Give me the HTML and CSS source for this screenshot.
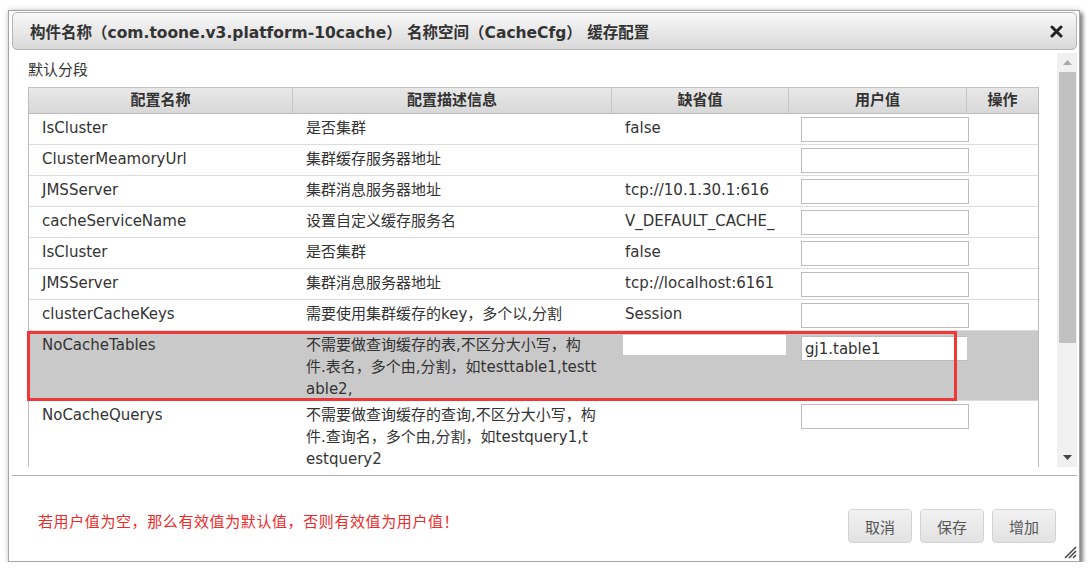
FILE: index.html
```html
<!DOCTYPE html>
<html lang="zh-CN">
<head>
    <meta charset="UTF-8">
    <meta name="viewport" content="width=device-width, initial-scale=1.0">
    <title>缓存配置</title>
    <link rel="stylesheet" href="styles.css">
</head>
<body>
    <!-- Cache config dialog -->
    <div class="dialog">
        <div class="titlebar">
            <span class="title">构件名称（com.toone.v3.platform-10cache） 名称空间（CacheCfg） 缓存配置</span>
            <span class="close">
                <svg width="13" height="13" viewBox="0 0 13 13">
                    <path d="M2 2 L11 11 M11 2 L2 11" stroke="#222" stroke-width="3" stroke-linecap="round"/>
                </svg>
            </span>
        </div>

        <div class="dialog-body">
            <div class="content">
                <div class="group-label">默认分段</div>
                <table class="cfg-table">
                    <colgroup>
                        <col style="width:264px">
                        <col style="width:319px">
                        <col style="width:177px">
                        <col style="width:178px">
                        <col style="width:71px">
                    </colgroup>
                    <thead>
                        <tr>
                            <th>配置名称</th>
                            <th>配置描述信息</th>
                            <th>缺省值</th>
                            <th>用户值</th>
                            <th class="last">操作</th>
                        </tr>
                    </thead>
                    <tbody>
                        <tr>
                            <td>IsCluster</td>
                            <td>是否集群</td>
                            <td class="val"><div class="clip">false</div></td>
                            <td class="user"><input type="text"></td>
                            <td></td>
                        </tr>
                        <tr>
                            <td>ClusterMeamoryUrl</td>
                            <td>集群缓存服务器地址</td>
                            <td class="val"><div class="clip"></div></td>
                            <td class="user"><input type="text"></td>
                            <td></td>
                        </tr>
                        <tr>
                            <td>JMSServer</td>
                            <td>集群消息服务器地址</td>
                            <td class="val"><div class="clip">tcp://10.1.30.1:616</div></td>
                            <td class="user"><input type="text"></td>
                            <td></td>
                        </tr>
                        <tr>
                            <td>cacheServiceName</td>
                            <td>设置自定义缓存服务名</td>
                            <td class="val"><div class="clip">V_DEFAULT_CACHE_</div></td>
                            <td class="user"><input type="text"></td>
                            <td></td>
                        </tr>
                        <tr>
                            <td>IsCluster</td>
                            <td>是否集群</td>
                            <td class="val"><div class="clip">false</div></td>
                            <td class="user"><input type="text"></td>
                            <td></td>
                        </tr>
                        <tr>
                            <td>JMSServer</td>
                            <td>集群消息服务器地址</td>
                            <td class="val"><div class="clip">tcp://localhost:6161</div></td>
                            <td class="user"><input type="text"></td>
                            <td></td>
                        </tr>
                        <tr>
                            <td>clusterCacheKeys</td>
                            <td>需要使用集群缓存的key，多个以,分割</td>
                            <td class="val"><div class="clip">Session</div></td>
                            <td class="user"><input type="text"></td>
                            <td></td>
                        </tr>
                        <tr class="picked">
                            <td>NoCacheTables</td>
                            <td>不需要做查询缓存的表,不区分大小写，构<br>件.表名，多个由,分割，如testtable1,testt<br>able2,</td>
                            <td class="val"><div class="empty-box"></div></td>
                            <td class="user"><input type="text" value="gj1.table1"></td>
                            <td></td>
                        </tr>
                        <tr>
                            <td>NoCacheQuerys</td>
                            <td>不需要做查询缓存的查询,不区分大小写，构<br>件.查询名，多个由,分割，如testquery1,t<br>estquery2</td>
                            <td class="val"><div class="clip"></div></td>
                            <td class="user"><input type="text"></td>
                            <td></td>
                        </tr>
                    </tbody>
                </table>
                <!-- red annotation box -->
                <div class="mark"></div>
            </div>

            <div class="scrollbar">
                <div class="sb-arrow">
                    <svg width="9" height="5" viewBox="0 0 9 5"><path d="M0 5 L4.5 0 L9 5 Z" fill="#a8a8a8"/></svg>
                </div>
                <div class="sb-thumb"></div>
                <div class="sb-gap"></div>
                <div class="sb-arrow">
                    <svg width="9" height="5" viewBox="0 0 9 5"><path d="M0 0 L9 0 L4.5 5 Z" fill="#444"/></svg>
                </div>
            </div>
        </div>

        <div class="footer">
            <div class="note">若用户值为空，那么有效值为默认值，否则有效值为用户值！</div>
            <div class="btn-group">
                <button class="btn">取消</button>
                <button class="btn">保存</button>
                <button class="btn">增加</button>
            </div>
        </div>

        <svg class="grip" width="14" height="14" viewBox="0 0 14 14">
            <path d="M13 2 L2 13 M13 6 L6 13 M13 10 L10 13" stroke="#444" stroke-width="1.5"/>
        </svg>
    </div>
</body>
</html>
```

FILE: styles.css
```css
* {
    margin: 0;
    padding: 0;
    box-sizing: border-box;
}

body {
    background: #fff;
    font-family: "DejaVu Sans", "Noto Sans CJK SC", sans-serif;
    font-size: 15px;
    color: #333;
}

.dialog {
    position: relative;
    width: 1072px;
    height: 552px;
    margin: 10px 0 0 8px;
    padding: 1px 2px 0 3px;
    border: 1px solid #a5a5a5;
    background: #fff;
    box-shadow: 3px 3px 4px rgba(0, 0, 0, 0.45), 0 0 6px rgba(0, 0, 0, 0.2);
    display: flex;
    flex-direction: column;
}

/* title bar */
.titlebar {
    height: 38px;
    flex-shrink: 0;
    display: flex;
    align-items: center;
    justify-content: space-between;
    padding: 0 13px 0 17px;
    border: 1px solid #b3b3b3;
    border-radius: 5px;
    background: linear-gradient(#f8f8f8, #d9d9d9);
    font-weight: bold;
    font-size: 15.5px;
    color: #333;
}

.close {
    display: flex;
}

/* scroll area */
.dialog-body {
    display: flex;
    height: 414px;
    margin-top: 3px;
    flex-shrink: 0;
}

.content {
    position: relative;
    flex: 1;
    overflow: hidden;
    padding: 7px 0 0 16px;
}

.group-label {
    line-height: 20px;
    margin-bottom: 7px;
}

.cfg-table {
    width: 1011px;
    table-layout: fixed;
    border-collapse: separate;
    border-spacing: 0;
    border-left: 1px solid #bdbdbd;
    border-right: 1px solid #bdbdbd;
}

.cfg-table th {
    height: 27px;
    padding: 0;
    border-top: 1px solid #c2c2c2;
    border-bottom: 1px solid #bdbdbd;
    border-right: 1px solid #c6c6c6;
    background: linear-gradient(#e8e8e8, #d8d8d8);
    font-weight: bold;
    text-align: center;
    line-height: 25px;
    color: #333;
}

.cfg-table th.last {
    border-right: none;
}

.cfg-table td {
    vertical-align: top;
    padding: 3px 13px 0 13px;
    line-height: 22px;
    border-bottom: 1px solid #dcdcdc;
    white-space: nowrap;
}

.cfg-table td.val {
    padding-right: 2px;
}

.clip {
    overflow: hidden;
    white-space: nowrap;
}

.cfg-table td.user {
    padding: 3px 0 2px 12px;
}

.cfg-table input {
    display: block;
    width: 168px;
    height: 25px;
    padding: 0 3px;
    border: 1px solid #bcbcbc;
    background: #fff;
    font-family: "DejaVu Sans", sans-serif;
    font-size: 15px;
    color: #333;
}

.cfg-table tr.picked td {
    background: #c9c9c9;
}

.cfg-table tr.picked td.user {
    padding-top: 5px;
}

.empty-box {
    width: 163px;
    height: 20px;
    margin: 1px 0 0 -2px;
    background: #fff;
}

.mark {
    position: absolute;
    left: 15px;
    top: 278px;
    width: 930px;
    height: 70px;
    border: 3px solid #ee3838;
}

/* fake vertical scrollbar */
.scrollbar {
    width: 20px;
    background: #f0f0f0;
    display: flex;
    flex-direction: column;
}

.sb-arrow {
    height: 19px;
    display: flex;
    align-items: center;
    justify-content: center;
    padding-left: 1px;
}

.sb-thumb {
    height: 271px;
    margin: 0 1px 0 2px;
    background: #c1c1c1;
}

.sb-gap {
    flex: 1;
}

/* footer */
.footer {
    flex: 1;
    margin-top: 8px;
    border-top: 1px solid #adadad;
    display: flex;
    align-items: flex-start;
    padding: 33px 21px 0 26px;
}

.note {
    flex: 1;
    margin-top: 3px;
    line-height: 20px;
    letter-spacing: 0.6px;
    color: #ee2a2a;
}

.btn-group {
    display: flex;
    gap: 8px;
}

.btn {
    width: 64px;
    height: 34px;
    border: 1px solid #d2d2d2;
    border-radius: 4px;
    background: linear-gradient(#f2f2f2, #e2e2e2);
    font-family: "DejaVu Sans", "Noto Sans CJK SC", sans-serif;
    font-size: 15px;
    color: #555;
    cursor: pointer;
}

.grip {
    position: absolute;
    right: 2px;
    bottom: 2px;
}
```
